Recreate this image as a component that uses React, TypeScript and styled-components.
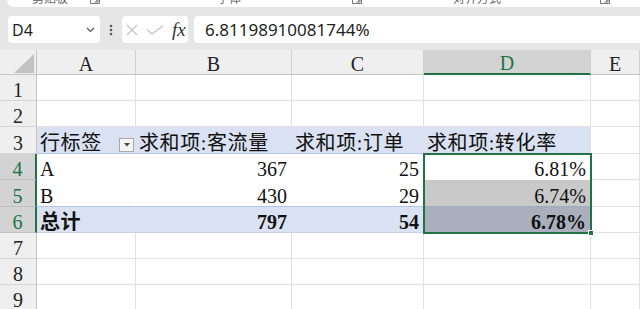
import styled, { createGlobalStyle } from 'styled-components'

const GREEN = '#217346'
const GRID = '#e1e1e1'
const PIVOT_BLUE = '#d9e1f2'
const PIVOT_LINE = '#b4c6e7'
const CELL_FONT = '"Liberation Serif", "Noto Sans CJK SC", serif'

const GlobalStyle = createGlobalStyle`
  * { box-sizing: border-box; }
  html, body { margin: 0; padding: 0; }
  body {
    background: #e6e6e6;
    font-family: "Noto Sans", "Liberation Sans", sans-serif;
  }
`

const Window = styled.div`
  width: 640px;
  height: 309px;
  overflow: hidden;
  display: flex;
  flex-direction: column;
  background: #e6e6e6;
`

/* ribbon, only its bottom edge shows */
const Ribbon = styled.div`
  flex: none;
  height: 7px;
  margin-left: 7px;
  background: #fff;
  border-bottom-left-radius: 7px;
  display: flex;
  overflow: hidden;
`

const RibbonGroup = styled.div<{ $width: number; $labelAt: number; $tail: number }>`
  flex: none;
  width: ${p => p.$width}px;
  margin-top: -8px;
  padding-left: ${p => p.$labelAt}px;
  padding-right: ${p => p.$tail}px;
  display: flex;
  align-items: flex-start;
`

const GroupLabel = styled.span`
  font: 12px/12px "Noto Sans CJK SC", sans-serif;
  color: #6b6b6b;
  white-space: nowrap;
`

const Launcher = styled.svg`
  margin-left: auto;
  margin-top: 2px;
  width: 10px;
  height: 10px;
`

/* formula bar */
const FormulaBar = styled.div`
  flex: none;
  height: 27px;
  margin: 9px 0 7px;
  padding-left: 8px;
  display: flex;
  align-items: stretch;
`

const NameBox = styled.div`
  width: 92px;
  background: #fff;
  border-radius: 4px;
  display: flex;
  align-items: center;
  justify-content: space-between;
  padding: 0 5px 0 4px;
  font-size: 16px;
  color: #1f1f1f;
`

const Grip = styled.div`
  width: 22px;
  display: flex;
  align-items: center;
  justify-content: center;
`

const FxBox = styled.div`
  width: 66px;
  background: #fff;
  border-radius: 4px;
  display: flex;
  align-items: center;
  gap: 8px;
  padding-left: 4px;
`

const FxLabel = styled.span`
  font: italic 19px/1 "Liberation Serif", serif;
  color: #333;
`

const FormulaInput = styled.div`
  flex: 1;
  margin-left: 6px;
  background: #fff;
  border-radius: 4px 0 0 4px;
  display: flex;
  align-items: center;
  padding-left: 11px;
  font-size: 17px;
  color: #1f1f1f;
`

/* sheet */
const Sheet = styled.div`
  flex: none;
  display: grid;
  grid-template-columns: 37px 99px 156px 132px 167px 49px;
  grid-template-rows: 25px 26px 26px 27px 26px 27px 26px 26px 26px 26px;
  background: #fff;
`

const Corner = styled.div`
  grid-row: 1;
  grid-column: 1;
  background: #efefef;
  border-right: 1px solid #c4c4c4;
  border-bottom: 1px solid #c4c4c4;
  display: flex;
  align-items: flex-end;
  justify-content: flex-end;
  padding: 0 2px 1px 0;
`

const ColHeader = styled.div<{ $col: number; $active?: boolean }>`
  grid-row: 1;
  grid-column: ${p => p.$col};
  background: ${p => (p.$active ? '#d3d3d3' : '#efefef')};
  border-right: 1px solid #d0d0d0;
  border-bottom: ${p => (p.$active ? `2px solid ${GREEN}` : '1px solid #c4c4c4')};
  color: ${p => (p.$active ? GREEN : '#222')};
  display: flex;
  align-items: flex-end;
  justify-content: center;
  font: 20px/20px "Liberation Serif", serif;
  overflow: hidden;
`

const RowHeader = styled.div<{ $row: number; $active?: boolean }>`
  grid-row: ${p => p.$row};
  grid-column: 1;
  background: ${p => (p.$active ? '#d3d3d3' : '#efefef')};
  border-right: ${p => (p.$active ? `2px solid ${GREEN}` : '1px solid #c4c4c4')};
  border-bottom: 1px solid ${p => (p.$active ? '#bdbdbd' : '#d6d6d6')};
  color: ${p => (p.$active ? GREEN : '#222')};
  display: flex;
  align-items: flex-end;
  justify-content: center;
  font: 20px/20px "Liberation Serif", serif;
  overflow: hidden;
`

const Cell = styled.div<{
  $row: number
  $col: number
  $align?: 'left' | 'right'
  $bold?: boolean
  $fill?: string
  $line?: string
  $pivot?: boolean
}>`
  grid-row: ${p => p.$row};
  grid-column: ${p => p.$col};
  background: ${p => p.$fill ?? '#fff'};
  border-right: 1px solid ${p => (p.$pivot ? 'transparent' : GRID)};
  border-bottom: 1px solid ${p => p.$line ?? GRID};
  display: flex;
  align-items: flex-end;
  justify-content: ${p => (p.$align === 'right' ? 'flex-end' : 'flex-start')};
  padding: 0 4px 0 3px;
  font: ${p => (p.$bold ? 700 : 400)} 20px/20px ${CELL_FONT};
  letter-spacing: ${p => (p.$align === 'right' ? 0 : 0.6)}px;
  color: #111;
  white-space: nowrap;
  overflow: hidden;
`

const FilterButton = styled.span`
  flex: none;
  width: 15px;
  height: 14px;
  margin: 0 -3px 1px auto;
  background: #f4f4f4;
  border: 1px solid #a9a9a9;
  display: flex;
  align-items: center;
  justify-content: center;
`

const Selection = styled.div`
  grid-row: 5 / 8;
  grid-column: 5;
  margin: -1px;
  border: 2px solid ${GREEN};
  position: relative;
  z-index: 2;
  pointer-events: none;
`

const FillHandle = styled.span`
  position: absolute;
  right: -4px;
  bottom: -4px;
  width: 6px;
  height: 6px;
  background: ${GREEN};
  border: 1px solid #fff;
`

type CellSpec = {
  text?: string
  align?: 'left' | 'right'
  bold?: boolean
  fill?: string
  line?: string
  pivot?: boolean
  filter?: boolean
}

const head = { fill: PIVOT_BLUE, line: PIVOT_LINE, pivot: true }
const body = { pivot: true, line: '#fff' }
const bodyEnd = { pivot: true, line: PIVOT_LINE }
const total = { fill: PIVOT_BLUE, line: '#c8d3ea', pivot: true, bold: true }
const blank: CellSpec = {}

const columns = ['A', 'B', 'C', 'D', 'E']

const rows: CellSpec[][] = [
  [blank, blank, blank, blank, blank],
  [blank, blank, blank, blank, blank],
  [
    { ...head, text: '行标签', filter: true },
    { ...head, text: '求和项:客流量' },
    { ...head, text: '求和项:订单' },
    { fill: PIVOT_BLUE, line: PIVOT_LINE, text: '求和项:转化率' },
    blank,
  ],
  [
    { ...body, text: 'A' },
    { ...body, text: '367', align: 'right' },
    { ...body, text: '25', align: 'right' },
    { line: '#fff', text: '6.81%', align: 'right' },
    blank,
  ],
  [
    { ...bodyEnd, text: 'B' },
    { ...bodyEnd, text: '430', align: 'right' },
    { ...bodyEnd, text: '29', align: 'right' },
    { fill: '#c9c9c9', line: '#a3abbf', text: '6.74%', align: 'right' },
    blank,
  ],
  [
    { ...total, text: '总计' },
    { ...total, text: '797', align: 'right' },
    { ...total, text: '54', align: 'right' },
    { fill: '#a9afbc', line: '#c8d3ea', bold: true, text: '6.78%', align: 'right' },
    blank,
  ],
  [blank, blank, blank, blank, blank],
  [blank, blank, blank, blank, blank],
  [blank, blank, blank, blank, blank],
]

const activeRows = [4, 5, 6]

const ribbonGroups = [
  { label: '剪贴板', width: 98, labelAt: 25, tail: 5 },
  { label: '字体', width: 260, labelAt: 112, tail: 3 },
  { label: '对齐方式', width: 247, labelAt: 88, tail: 2 },
]

const App = () => {
  return (
    <>
      <GlobalStyle />
      <Window>
        <Ribbon>
          {ribbonGroups.map(g => (
            <RibbonGroup key={g.label} $width={g.width} $labelAt={g.labelAt} $tail={g.tail}>
              <GroupLabel>{g.label}</GroupLabel>
              <Launcher viewBox="0 0 10 10" fill="none" stroke="#777" strokeWidth="1">
                <path d="M0.5 0.5V9.5H9.5V5" />
                <path d="M3 3L8 8M8 4.5V8H4.5" />
              </Launcher>
            </RibbonGroup>
          ))}
        </Ribbon>

        <FormulaBar>
          <NameBox>
            <span>D4</span>
            <svg width="9" height="6" viewBox="0 0 9 6" fill="none" stroke="#555" strokeWidth="1.2">
              <path d="M1 1L4.5 4.5L8 1" />
            </svg>
          </NameBox>
          <Grip>
            <svg width="4" height="12" viewBox="0 0 4 12" fill="#5a5a5a">
              <circle cx="2" cy="2" r="1.3" />
              <circle cx="2" cy="6" r="1.3" />
              <circle cx="2" cy="10" r="1.3" />
            </svg>
          </Grip>
          <FxBox>
            <svg width="12" height="12" viewBox="0 0 12 12" fill="none" stroke="#c2c2c2" strokeWidth="1.2">
              <path d="M1 1L11 11M11 1L1 11" />
            </svg>
            <svg width="18" height="10" viewBox="0 0 18 10" fill="none" stroke="#c2c2c2" strokeWidth="1.2">
              <path d="M1 4.5L6 9L17 0.8" />
            </svg>
            <FxLabel>fx</FxLabel>
          </FxBox>
          <FormulaInput>6.81198910081744%</FormulaInput>
        </FormulaBar>

        <Sheet>
          <Corner>
            <svg width="20" height="19" viewBox="0 0 20 19">
              <path d="M20 0V19H0Z" fill="#c2c2c2" />
            </svg>
          </Corner>
          {columns.map((c, i) => (
            <ColHeader key={c} $col={i + 2} $active={c === 'D'}>
              {c}
            </ColHeader>
          ))}
          {rows.map((cells, r) => {
            const rowNo = r + 1
            return [
              <RowHeader key={`h${rowNo}`} $row={rowNo + 1} $active={activeRows.includes(rowNo)}>
                {rowNo}
              </RowHeader>,
              ...cells.map((cell, c) => (
                <Cell
                  key={`${columns[c]}${rowNo}`}
                  $row={rowNo + 1}
                  $col={c + 2}
                  $align={cell.align}
                  $bold={cell.bold}
                  $fill={cell.fill}
                  $line={cell.line}
                  $pivot={cell.pivot}
                >
                  {cell.text}
                  {cell.filter && (
                    <FilterButton>
                      <svg width="6" height="4" viewBox="0 0 6 4">
                        <path d="M0 0H6L3 3.5Z" fill="#444" />
                      </svg>
                    </FilterButton>
                  )}
                </Cell>
              )),
            ]
          })}
          <Selection>
            <FillHandle />
          </Selection>
        </Sheet>
      </Window>
    </>
  )
}

export default App
